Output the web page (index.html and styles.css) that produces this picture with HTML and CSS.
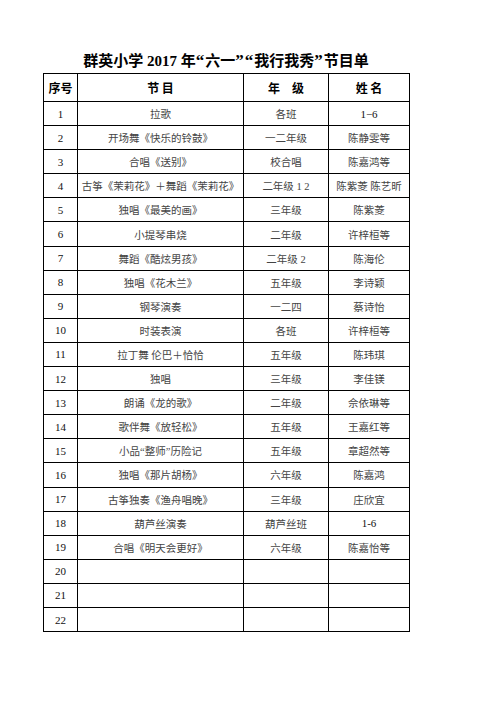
FILE: index.html
```html
<!DOCTYPE html>
<html lang="zh-CN">
<head>
<meta charset="utf-8">
<title>群英小学 2017 年“六一”“我行我秀”节目单</title>
<link rel="stylesheet" href="styles.css">
</head>
<body>
<div class="page">
  <h1 class="title">群英小学 2017 年<span class="q">“</span>六一<span class="q">”“</span>我行我秀<span class="q">”</span>节目单</h1>
  <table class="program">
    <colgroup>
      <col class="c-no"><col class="c-item"><col class="c-grade"><col class="c-name">
    </colgroup>
    <thead>
      <tr><th>序号</th><th>节 目</th><th>年　级</th><th>姓 名</th></tr>
    </thead>
    <tbody>
      <tr><td class="num">1</td><td>拉歌</td><td>各班</td><td class="num">1−6</td></tr>
      <tr><td class="num">2</td><td>开场舞《快乐的铃鼓》</td><td>一二年级</td><td>陈静雯等</td></tr>
      <tr><td class="num">3</td><td>合唱《送别》</td><td>校合唱</td><td>陈嘉鸿等</td></tr>
      <tr><td class="num">4</td><td>古筝《茉莉花》＋舞蹈《茉莉花》</td><td>二年级 1 2</td><td>陈紫菱 陈艺昕</td></tr>
      <tr><td class="num">5</td><td>独唱《最美的画》</td><td>三年级</td><td>陈紫菱</td></tr>
      <tr><td class="num">6</td><td>小提琴串烧</td><td>二年级</td><td>许梓桓等</td></tr>
      <tr><td class="num">7</td><td>舞蹈《酷炫男孩》</td><td>二年级 2</td><td>陈海伦</td></tr>
      <tr><td class="num">8</td><td>独唱《花木兰》</td><td>五年级</td><td>李诗颖</td></tr>
      <tr><td class="num">9</td><td>钢琴演奏</td><td>一二四</td><td>蔡诗怡</td></tr>
      <tr><td class="num">10</td><td>时装表演</td><td>各班</td><td>许梓桓等</td></tr>
      <tr><td class="num">11</td><td>拉丁舞 伦巴＋恰恰</td><td>五年级</td><td>陈玮琪</td></tr>
      <tr><td class="num">12</td><td>独唱</td><td>三年级</td><td>李佳镁</td></tr>
      <tr><td class="num">13</td><td>朗诵《龙的歌》</td><td>二年级</td><td>佘依琳等</td></tr>
      <tr><td class="num">14</td><td>歌伴舞《放轻松》</td><td>五年级</td><td>王嘉红等</td></tr>
      <tr><td class="num">15</td><td>小品“整师”历险记</td><td>五年级</td><td>章超然等</td></tr>
      <tr><td class="num">16</td><td>独唱《那片胡杨》</td><td>六年级</td><td>陈嘉鸿</td></tr>
      <tr><td class="num">17</td><td>古筝独奏《渔舟唱晚》</td><td>三年级</td><td>庄欣宜</td></tr>
      <tr><td class="num">18</td><td>葫芦丝演奏</td><td>葫芦丝班</td><td class="num">1-6</td></tr>
      <tr><td class="num">19</td><td>合唱《明天会更好》</td><td>六年级</td><td>陈嘉怡等</td></tr>
      <tr><td class="num">20</td><td></td><td></td><td></td></tr>
      <tr><td class="num">21</td><td></td><td></td><td></td></tr>
      <tr><td class="num">22</td><td></td><td></td><td></td></tr>
    </tbody>
  </table>
</div>
</body>
</html>
```

FILE: styles.css
```css
html, body {
  margin: 0;
  padding: 0;
  background: #fff;
}

.page {
  padding-left: 43px;
  width: 366px;
}

.title {
  margin: 51px 0 2px 0;
  height: 20px;
  line-height: 20px;
  font-family: "Liberation Serif", "Noto Sans CJK SC", serif;
  font-size: 15px;
  font-weight: bold;
  text-align: center;
  color: #000;
  white-space: nowrap;
}

.title .q {
  font-size: 17px;
  letter-spacing: 1px;
}

.program {
  width: 366px;
  border-collapse: collapse;
  table-layout: fixed;
  font-family: "Liberation Serif", "Noto Sans CJK SC", serif;
}

.c-no { width: 34px; }
.c-item { width: 166px; }
.c-grade { width: 85px; }
.c-name { width: 81px; }

.program th,
.program td {
  border: 1px solid #000;
  padding: 0;
  text-align: center;
  vertical-align: middle;
  white-space: nowrap;
}

.program th {
  height: 27px;
  font-family: "Noto Sans CJK SC", sans-serif;
  font-size: 12px;
  font-weight: bold;
  color: #000;
}

.program td {
  height: 23.1px;
  font-size: 10.5px;
  color: #444;
}

.program td.num {
  font-size: 11px;
  color: #111;
}
```
